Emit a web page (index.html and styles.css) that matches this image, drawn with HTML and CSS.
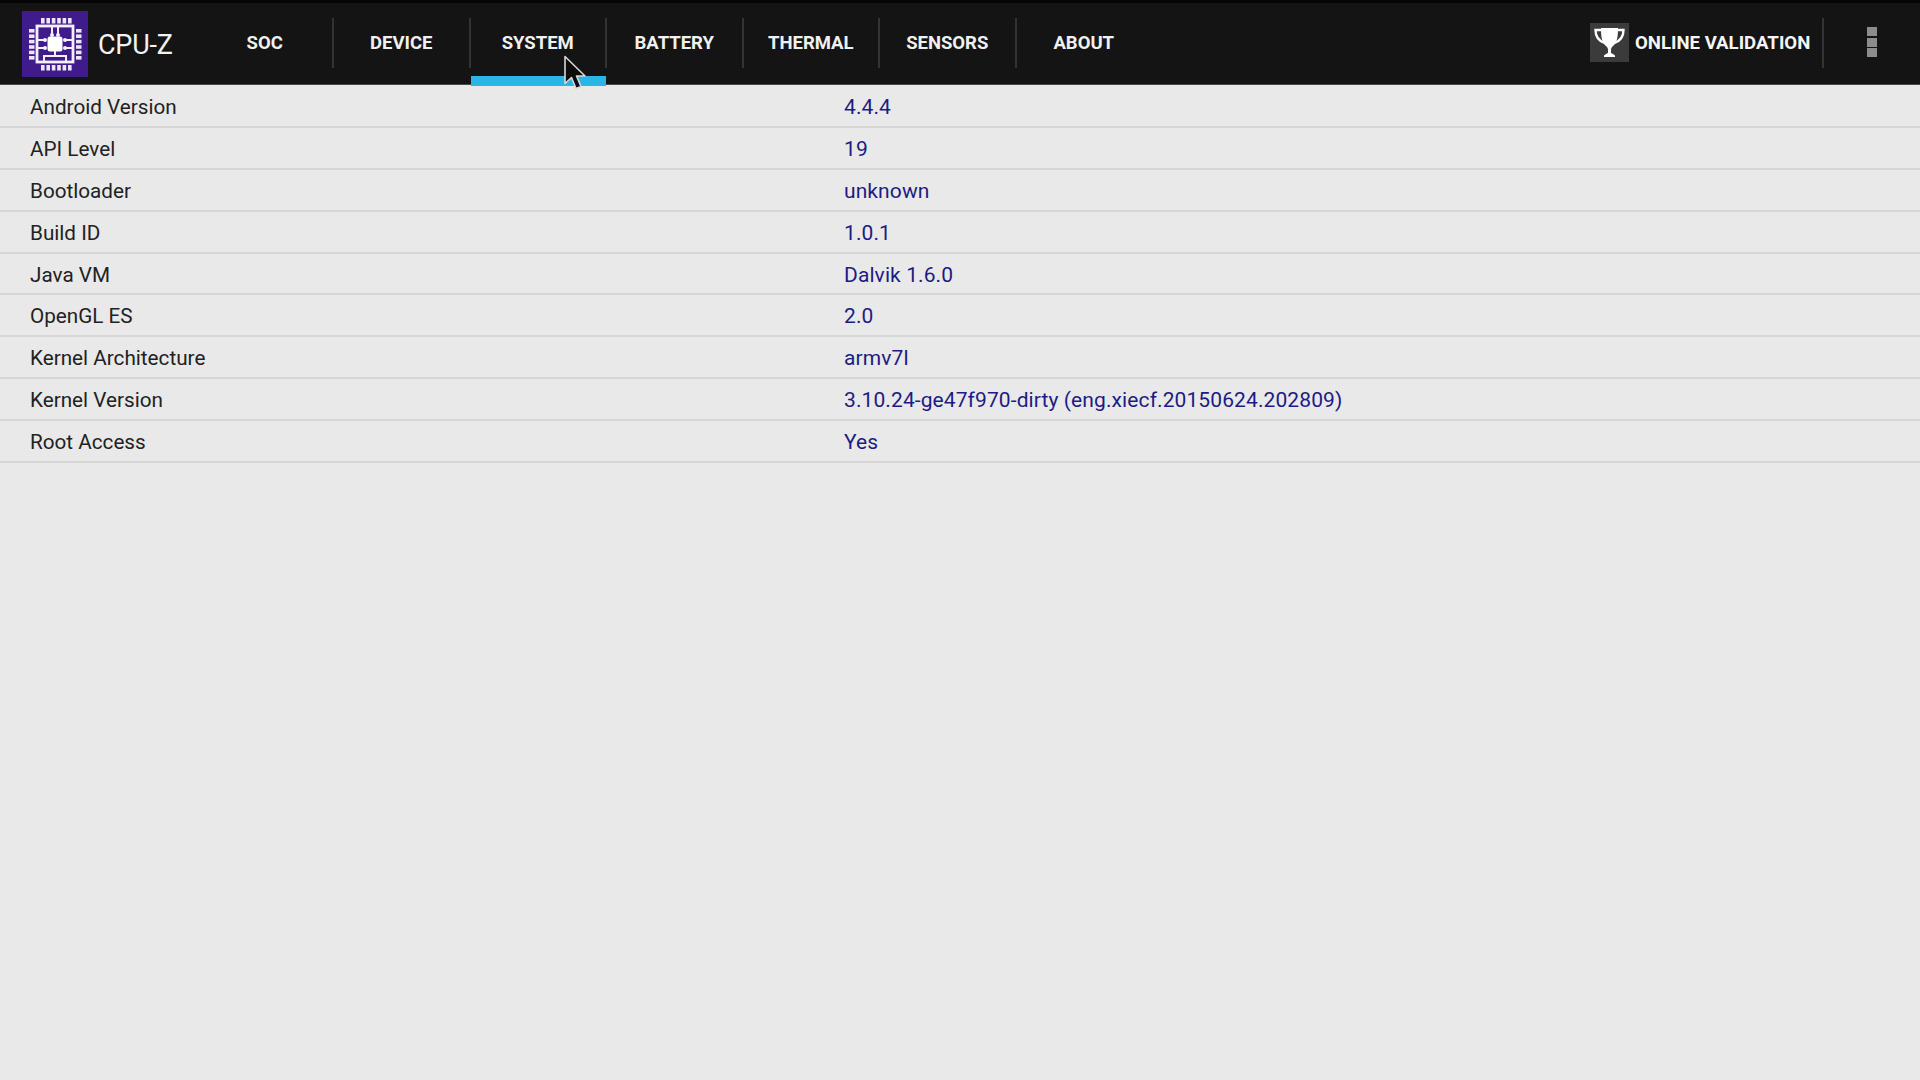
FILE: index.html
```html
<!DOCTYPE html>
<html lang="en">
<head>
<meta charset="utf-8">
<title>CPU-Z</title>
<link rel="stylesheet" href="styles.css">
</head>
<body>
<header class="bar">
  <div class="brand">
    <svg class="logo" viewBox="0 0 66 66" aria-hidden="true">
      <rect width="66" height="66" fill="#3f1b8c"/>
      <rect x="15" y="15" width="36" height="36" fill="none" stroke="#f4f0fb" stroke-width="2.8"/>
      <rect x="25.500" y="25.500" width="15" height="15" rx="2.500" fill="#fff"/>
      <g fill="none" stroke="#f4f0fb" stroke-width="2">
        <path d="M30 15v8M36 15v8M15 29h8M15 37h8M51 29h-8M51 37h-8"/>
        <path d="M33 40v4M22 51v-6h22v6"/>
      </g>
      <g fill="#f4f0fb">
        <circle cx="30" cy="24" r="2"/><circle cx="36" cy="24" r="2"/>
        <circle cx="23" cy="29" r="2"/><circle cx="23" cy="37" r="2"/>
        <circle cx="43" cy="29" r="2"/><circle cx="43" cy="37" r="2"/>
      </g>
      <g fill="#ece6f8">
        <rect x="19" y="7" width="3.600" height="5.500"/><rect x="24.400" y="7" width="3.600" height="5.500"/><rect x="29.800" y="7" width="3.600" height="5.500"/><rect x="35.200" y="7" width="3.600" height="5.500"/><rect x="40.600" y="7" width="3.600" height="5.500"/><rect x="46" y="7" width="3.600" height="5.500"/>
        <rect x="19" y="54" width="3.600" height="5.500"/><rect x="24.400" y="54" width="3.600" height="5.500"/><rect x="29.800" y="54" width="3.600" height="5.500"/><rect x="35.200" y="54" width="3.600" height="5.500"/><rect x="40.600" y="54" width="3.600" height="5.500"/><rect x="46" y="54" width="3.600" height="5.500"/>
        <rect x="7" y="18" width="5.500" height="3.600"/><rect x="7" y="23.400" width="5.500" height="3.600"/><rect x="7" y="28.800" width="5.500" height="3.600"/><rect x="7" y="34.200" width="5.500" height="3.600"/><rect x="7" y="39.600" width="5.500" height="3.600"/><rect x="7" y="45" width="5.500" height="3.600"/>
        <rect x="54" y="18" width="5.500" height="3.600"/><rect x="54" y="23.400" width="5.500" height="3.600"/><rect x="54" y="28.800" width="5.500" height="3.600"/><rect x="54" y="34.200" width="5.500" height="3.600"/><rect x="54" y="39.600" width="5.500" height="3.600"/><rect x="54" y="45" width="5.500" height="3.600"/>
      </g>
    </svg>
    <span class="title">CPU-Z</span>
  </div>
  <nav class="tabs">
    <div class="tab">SOC</div>
    <div class="tab">DEVICE</div>
    <div class="tab tab-active">SYSTEM</div>
    <div class="tab">BATTERY</div>
    <div class="tab">THERMAL</div>
    <div class="tab">SENSORS</div>
    <div class="tab tab-last">ABOUT</div>
  </nav>
  <div class="action">
    <span class="trophy">
      <svg viewBox="0 0 39 39" width="39" height="39" aria-hidden="true">
        <path d="M11 5h17c0 9-.8 15-5.500 18.500-1 .8-1.500 2-1.500 3.500v2.500c0 1 2.500 1.500 4 3v1.500H14v-1.500c1.500-1.500 4-2 4-3V27c0-1.500-.5-2.700-1.500-3.500C11.800 20 11 14 11 5z" fill="#fff"/>
        <path d="M11 7H5.500c0 6 2.500 10.500 9 13M28 7h5.500c0 6-2.500 10.500-9 13" fill="none" stroke="#fff" stroke-width="2.400"/>
      </svg>
    </span>
    <span class="action-label">ONLINE VALIDATION</span>
  </div>
  <div class="overflow" aria-hidden="true"><i></i><i></i><i></i></div>
  <svg class="cursor" viewBox="0 0 24 36" aria-hidden="true">
    <path d="M2 1.500v27l6.500-6 4.500 11 5-2-4.500-10.500H22z" fill="#0c0c0c" stroke="#d8d8d8" stroke-width="1.600" stroke-linejoin="round"/>
  </svg>
</header>
<main class="list">
  <div class="row"><span class="key">Android Version</span><span class="val">4.4.4</span></div>
  <div class="row"><span class="key">API Level</span><span class="val">19</span></div>
  <div class="row"><span class="key">Bootloader</span><span class="val">unknown</span></div>
  <div class="row"><span class="key">Build ID</span><span class="val">1.0.1</span></div>
  <div class="row"><span class="key">Java VM</span><span class="val">Dalvik 1.6.0</span></div>
  <div class="row"><span class="key">OpenGL ES</span><span class="val">2.0</span></div>
  <div class="row"><span class="key">Kernel Architecture</span><span class="val">armv7l</span></div>
  <div class="row"><span class="key">Kernel Version</span><span class="val">3.10.24-ge47f970-dirty (eng.xiecf.20150624.202809)</span></div>
  <div class="row"><span class="key">Root Access</span><span class="val">Yes</span></div>
</main>
</body>
</html>
```
FILE: styles.css
```css
* { box-sizing: border-box; }
html, body { margin: 0; height: 100%; }
body {
  background: #e9e9e9;
  font-family: Roboto, "Liberation Sans", sans-serif;
  overflow: hidden;
}
.bar {
  position: relative;
  display: flex;
  align-items: stretch;
  height: 85px;
  background: #141414;
  border-top: 3px solid #050505;
  box-shadow: inset 0 -1px #4a4a4a;
  color: #f5f5f5;
}
.brand {
  flex: 0 0 196.5px;
  display: flex;
  align-items: center;
  padding-left: 22px;
}
.logo { width: 66px; height: 66px; display: block; flex: none; }
.title {
  margin-left: 10px;
  padding-top: 2px;
  font-size: 27px;
  font-weight: 400;
  letter-spacing: -0.2px;
  color: #f2f2f2;
}
.tabs { display: flex; }
.tab {
  position: relative;
  flex: 0 0 136.5px;
  display: flex;
  align-items: center;
  justify-content: center;
  padding-bottom: 2px;
  font-size: 18.5px;
  font-weight: 700;
  color: #f0f0f0;
}
.tab::after {
  content: "";
  position: absolute;
  right: -1px;
  top: 15px;
  width: 2px;
  height: 50px;
  background: #333333;
}
.tab-last::after { display: none; }
.tab-active::before {
  content: "";
  position: absolute;
  left: 1px;
  right: 0;
  bottom: -1px;
  height: 10px;
  background: #29b5e8;
}
.action {
  margin-left: auto;
  flex: 0 0 234px;
  display: flex;
  align-items: center;
  padding-bottom: 1px;
  border-right: 2px solid #333333;
  margin-top: 15px;
  height: 50px;
}
.trophy {
  flex: none;
  width: 39px;
  height: 39px;
  background: #3b3b3b;
}
.trophy svg { display: block; }
.action-label {
  margin-left: 6px;
  font-size: 18.6px;
  font-weight: 700;
  color: #f5f5f5;
  white-space: nowrap;
}
.overflow {
  flex: 0 0 96px;
  display: flex;
  flex-direction: column;
  align-items: center;
  justify-content: center;
  gap: 1.500px;
  padding-bottom: 4px;
}
.overflow i {
  display: block;
  width: 10px;
  height: 9px;
  background: #8c8c8c;
}
.cursor {
  position: absolute;
  left: 563px;
  top: 52px;
  width: 24px;
  height: 36px;
}
.list { padding-top: 1px; }
.row {
  display: grid;
  grid-template-columns: 814px 1fr;
  align-items: center;
  height: 41.9px;
  padding-left: 30px;
  padding-top: 2px;
  border-bottom: 2px solid #d6d6d6;
}
.key { color: #222222; font-size: 20.7px; }
.val { color: #1c1c84; font-size: 21px; letter-spacing: 0.1px; }
```
